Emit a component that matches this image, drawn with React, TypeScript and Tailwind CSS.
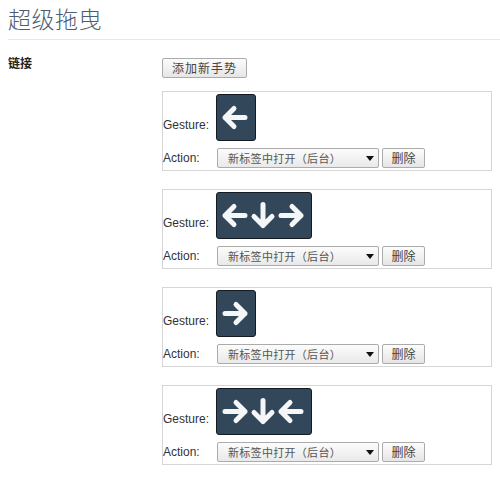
import React from "react";

type Dir = "L" | "R" | "D";

function Arrow({ dir, x }: { dir: Dir; x: number }) {
  const c = 23.5;
  const cx = x + 14;
  let d = "";
  if (dir === "L") {
    d = `M ${x + 24} ${c} L ${x + 4} ${c} M ${x + 13} ${c - 9} L ${x + 4} ${c} L ${x + 13} ${c + 9}`;
  } else if (dir === "R") {
    d = `M ${x + 4} ${c} L ${x + 24} ${c} M ${x + 15} ${c - 9} L ${x + 24} ${c} L ${x + 15} ${c + 9}`;
  } else {
    d = `M ${cx} ${c - 11} L ${cx} ${c + 10} M ${cx - 9} ${c + 1} L ${cx} ${c + 10} L ${cx + 9} ${c + 1}`;
  }
  return (
    <path
      d={d}
      fill="none"
      stroke="#f4f6f8"
      strokeWidth={5}
      strokeLinecap="round"
      strokeLinejoin="round"
    />
  );
}

function GestureIcon({ dirs }: { dirs: Dir[] }) {
  const w = 6 + dirs.length * 28 + 6;
  return (
    <div
      className="rounded-[3px] border border-[#151b22] bg-[#33475b] h-[47px]"
      style={{ width: w }}
    >
      <svg width={w - 2} height={45} viewBox={`1 1 ${w - 2} 45`}>
        {dirs.map((d, i) => (
          <Arrow key={i} dir={d} x={6 + i * 28 - 1} />
        ))}
      </svg>
    </div>
  );
}

function Card({ dirs }: { dirs: Dir[] }) {
  return (
    <div className="w-[330px] border border-[#d6d6d6] pt-[2px] pb-[2px]">
      <div className="flex items-end">
        <div className="w-[53px] mb-[9px] text-[12px] leading-[14px] text-[#333]">
          Gesture:
        </div>
        <GestureIcon dirs={dirs} />
      </div>
      <div className="mt-[7px] flex items-center">
        <div className="w-[54px] text-[12px] leading-[14px] text-[#333]">Action:</div>
        <div className="relative w-[162px] h-[20px] rounded-[2px] border border-[#ababab] bg-gradient-to-b from-[#fcfcfc] to-[#e9e9e9] flex items-center pl-[10px]">
          <span
            className="text-[11px] leading-[14px] text-[#555] tracking-[0.3px]"
            style={{ fontFamily: '"Noto Sans CJK SC", sans-serif' }}
          >
            新标签中打开（后台）
          </span>
          <svg
            className="absolute right-[4px] top-[7px]"
            width="8"
            height="5"
            viewBox="0 0 8 5"
          >
            <path d="M0 0 L8 0 L4 5 Z" fill="#111" />
          </svg>
        </div>
        <button
          className="ml-[3px] w-[43px] h-[20px] rounded-[2px] border border-[#ababab] bg-gradient-to-b from-[#fcfcfc] to-[#e6e6e6] text-[12px] leading-[14px] text-[#444]"
          style={{ fontFamily: '"Noto Sans CJK SC", sans-serif' }}
        >
          删除
        </button>
      </div>
    </div>
  );
}

export default function App() {
  const gestures: Dir[][] = [["L"], ["L", "D", "R"], ["R"], ["R", "D", "L"]];
  return (
    <div
      className="w-[500px] h-[481px] bg-white pl-2 overflow-hidden text-[#333]"
      style={{ fontFamily: '"Liberation Sans", Arial, "Noto Sans CJK SC", sans-serif' }}
    >
      <h1
        className="mt-[3px] text-[23px] leading-[30px] pb-[6px] border-b border-[#e8e8e8] text-[#4d5e73] font-light tracking-[0.5px]"
        style={{ fontFamily: '"Noto Sans CJK SC", sans-serif' }}
      >
        超级拖曳
      </h1>
      <div className="flex">
        <div
          className="w-[154px] pt-[15px] text-[12px] leading-[16px] font-bold text-[#222]"
          style={{ fontFamily: '"Noto Sans CJK SC", sans-serif' }}
        >
          链接
        </div>
        <div className="w-[330px] pt-[16px]">
          <button
            className="w-[85px] h-[20px] rounded-[2px] border border-[#ababab] bg-gradient-to-b from-[#fcfcfc] to-[#e6e6e6] text-[12px] leading-[14px] text-[#444] tracking-[1px]"
            style={{ fontFamily: '"Noto Sans CJK SC", sans-serif' }}
          >
            添加新手势
          </button>
          <div className="mt-[11px] flex flex-col gap-[18px]">
            {gestures.map((g, i) => (
              <Card key={i} dirs={g} />
            ))}
          </div>
        </div>
      </div>
    </div>
  );
}
